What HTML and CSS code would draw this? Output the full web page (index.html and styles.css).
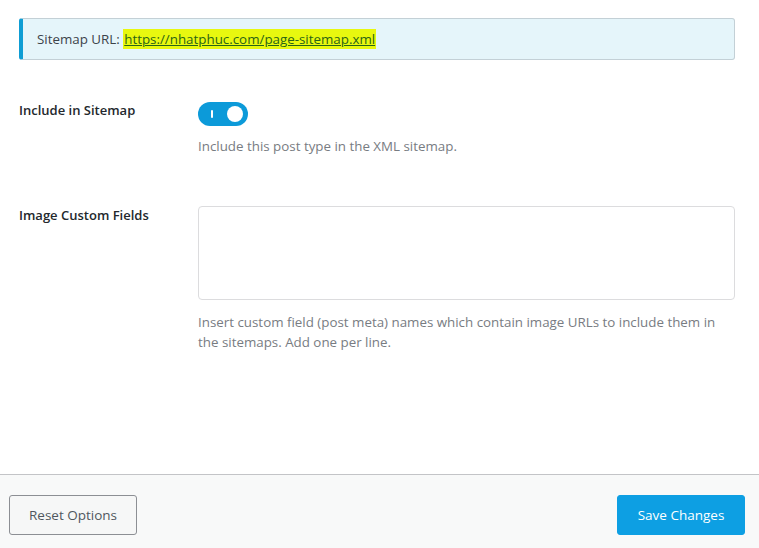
FILE: index.html
```html
<!DOCTYPE html>
<html>
<head>
<meta charset="utf-8">
<link rel="stylesheet" href="styles.css">
</head>
<body>
<div class="page">
  <div class="content">
    <div class="notice">Sitemap URL:&nbsp;<a class="url" href="#">https://nhatphuc.com/page-sitemap.xml</a></div>
    <div class="field field-toggle">
      <div class="label">Include in Sitemap</div>
      <div class="control">
        <span class="toggle"><span class="bar"></span><span class="knob"></span></span>
        <p class="desc">Include this post type in the XML sitemap.</p>
      </div>
    </div>
    <div class="field field-text">
      <div class="label">Image Custom Fields</div>
      <div class="control">
        <div class="textarea"></div>
        <p class="desc">Insert custom field (post meta) names which contain image URLs to include them in the sitemaps. Add one per line.</p>
      </div>
    </div>
  </div>
  <div class="footer">
    <button class="btn btn-reset">Reset Options</button>
    <button class="btn btn-save">Save Changes</button>
  </div>
</div>
</body>
</html>
```
FILE: styles.css
```css
html, body { margin: 0; padding: 0; background: #fff; }
body { font-family: "Open Sans", "Noto Sans", sans-serif; font-size: 13.35px; color: #3c434a; }
.page { width: 759px; height: 548px; display: flex; flex-direction: column; }
.content { flex: 1; padding: 18px 24px 0 19px; }
.notice {
  height: 42px; box-sizing: border-box;
  background: #e5f5fa; border: 1px solid #c3d0d6; border-left: 4px solid #0e9dd4;
  border-radius: 3px; padding: 0 0 0 14px; display: flex; align-items: center;
  color: #3c434a;
}
.url { color: #2a6415; background: #e8f80f; text-decoration: underline; padding: 1px 1px; }
.field { display: flex; }
.label { width: 179px; font-weight: 600; color: #23282d; font-size: 13px; line-height: 20px; }
.control { flex: 1; }
.field-toggle { margin-top: 40px; }
.toggle {
  display: block; position: relative; width: 50px; height: 24px; border-radius: 12px;
  background: #0c9ad9; margin-top: 2px;
}
.toggle .bar { position: absolute; left: 13px; top: 8px; width: 2px; height: 8px; background: #fff; border-radius: 1px; }
.toggle .knob { position: absolute; right: 5px; top: 4px; width: 16px; height: 16px; border-radius: 50%; background: #fff; }
.desc { margin: 0; color: #787c82; line-height: 20px; }
.field-toggle .desc { margin-top: 10px; }
.field-text { margin-top: 50px; }
.field-text .label { margin-top: -1px; }
.textarea { height: 94px; box-sizing: border-box; border: 1px solid #dcdcde; border-radius: 4px; background: #fff; }
.field-text .desc { margin-top: 12px; }
.footer {
  height: 74px; box-sizing: border-box; border-top: 1px solid #c3c4c7; background: #f8f9f9;
  display: flex; justify-content: space-between; align-items: flex-start;
  padding: 20px 14px 0 9px;
}
.btn { font-family: "Open Sans", "Noto Sans", sans-serif; font-size: 13.5px; height: 40px; width: 128px; border-radius: 3px; cursor: pointer; }
.btn-reset { background: #f6f7f7; border: 1px solid #8c8f94; color: #50575e; }
.btn-save { background: #0d9fe3; border: 1px solid #0d9fe3; color: #fff; }
```
